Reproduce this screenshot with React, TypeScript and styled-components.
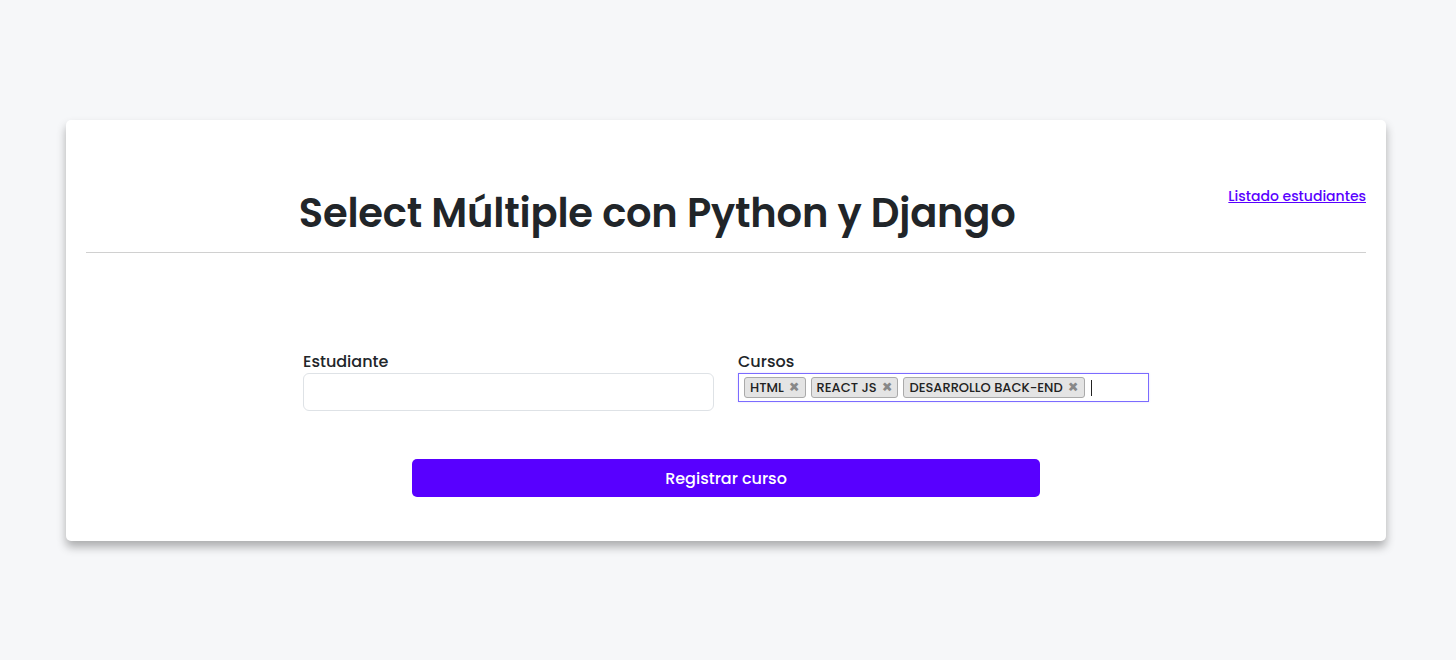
import styled, { createGlobalStyle } from 'styled-components';

const GlobalStyle = createGlobalStyle`
  body {
    margin: 0;
    background-color: #f6f7f9;
    font-family: Poppins, Inter, "Noto Sans", sans-serif;
    color: #212529;
  }
`;

const Page = styled.main`
  padding: 120px 70px 0 66px;
  min-height: 660px;
  box-sizing: border-box;
`;

const Card = styled.section`
  width: 1320px;
  height: 421px;
  box-sizing: border-box;
  background-color: #fff;
  border-radius: 5px;
  box-shadow: 0 6px 10px rgba(0, 0, 0, 0.3);
  padding: 0 20px;
`;

const Header = styled.header`
  display: flex;
  align-items: flex-start;
  height: 132px;
  border-bottom: 1px solid #d0d0d0;
`;

const Title = styled.h1`
  flex: 1;
  margin: 67px 0 0;
  text-align: center;
  font-size: 40px;
  font-weight: 600;
  letter-spacing: -0.2px;
  line-height: 52px;
  color: #212529;
`;

const ListLink = styled.a`
  margin-top: 66px;
  font-size: 14px;
  font-weight: 500;
  color: #5800ff;
  text-decoration: underline;
  line-height: 20px;
`;

const Form = styled.form`
  display: flex;
  flex-direction: column;
  align-items: center;
  padding-top: 97px;
`;

const Fields = styled.div`
  display: grid;
  grid-template-columns: 411px 411px;
  gap: 24px;
  height: 109px;
`;

const Field = styled.div`
  display: flex;
  flex-direction: column;
`;

const Label = styled.label`
  font-size: 16px;
  font-weight: 500;
  line-height: 23px;
  color: #212529;
`;

const Input = styled.input`
  height: 38px;
  box-sizing: border-box;
  border: 1px solid #dee2e6;
  border-radius: 6px;
  outline: none;
`;

const MultiBox = styled.div`
  display: flex;
  align-items: center;
  gap: 5px;
  height: 29px;
  box-sizing: border-box;
  padding: 0 5px;
  border: 1px solid #7b6cff;
  box-shadow: 0 0 2px rgba(88, 0, 255, 0.15);
`;

const Tag = styled.span`
  display: inline-flex;
  align-items: center;
  gap: 5px;
  height: 21px;
  box-sizing: border-box;
  padding: 0 5px;
  background-color: #e4e4e4;
  border: 1px solid #aaa;
  border-radius: 3px;
  font-size: 13px;
  font-weight: 500;
  color: #222;
`;

const Remove = styled.span`
  color: #888;
  font-size: 17px;
  font-weight: 700;
  line-height: 1;
`;

const Caret = styled.span`
  width: 1px;
  height: 16px;
  margin-left: 1px;
  background-color: #222;
`;

const Submit = styled.button`
  width: 628px;
  height: 38px;
  border: none;
  border-radius: 5px;
  background-color: #5800ff;
  color: #fff;
  font-family: inherit;
  font-size: 16px;
  font-weight: 500;
`;

const cursos = ['HTML', 'REACT JS', 'DESARROLLO BACK-END'];

const App = () => {
  return (
    <>
      <GlobalStyle />
      <Page>
        <Card>
          <Header>
            <Title>Select Múltiple con Python y Django</Title>
            <ListLink href="#">Listado estudiantes</ListLink>
          </Header>
          <Form onSubmit={(e) => e.preventDefault()}>
            <Fields>
              <Field>
                <Label>Estudiante</Label>
                <Input type="text" />
              </Field>
              <Field>
                <Label>Cursos</Label>
                <MultiBox>
                  {cursos.map((curso) => (
                    <Tag key={curso}>
                      {curso}
                      <Remove>×</Remove>
                    </Tag>
                  ))}
                  <Caret />
                </MultiBox>
              </Field>
            </Fields>
            <Submit type="submit">Registrar curso</Submit>
          </Form>
        </Card>
      </Page>
    </>
  );
};

export default App;
